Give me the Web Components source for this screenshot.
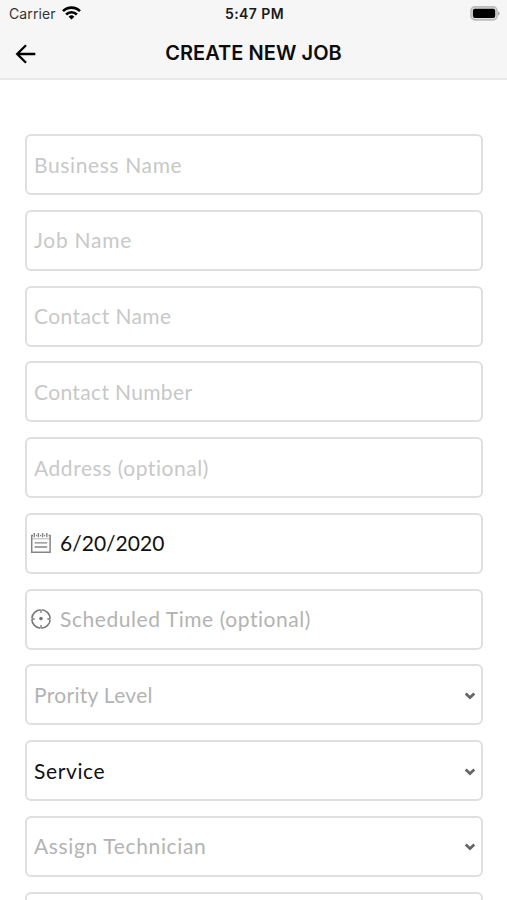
<!DOCTYPE html>
<html lang="en">
<head>
<meta charset="utf-8">
<meta name="viewport" content="width=device-width, initial-scale=1">
<title>Create New Job</title>
<style>
  html, body {
    margin: 0;
    height: 100%;
    overflow: hidden;
    background: #fff;
  }
</style>
</head>
<body>
<job-screen>
  <status-bar slot="top" carrier="Carrier" time="5:47 PM"></status-bar>
  <nav-header slot="top">CREATE NEW JOB</nav-header>
  <form-field style="--tracking: .63px">Business Name</form-field>
  <form-field style="--tracking: .75px">Job Name</form-field>
  <form-field>Contact Name</form-field>
  <form-field style="--tracking: .35px">Contact Number</form-field>
  <form-field style="--tracking: .54px">Address (optional)</form-field>
  <form-field icon="calendar" filled style="--tracking: .02px">6/20/2020</form-field>
  <form-field icon="clock" muted style="--tracking: .56px">Scheduled Time (optional)</form-field>
  <form-field select muted style="--tracking: .3px">Prority Level</form-field>
  <form-field select filled style="--tracking: .62px">Service</form-field>
  <form-field select muted style="--tracking: .64px">Assign Technician</form-field>
  <form-field></form-field>
</job-screen>

<script>
const icons = {
  calendar: `
    <svg width="22" height="22" viewBox="0 0 22 22" fill="none" stroke="#858585" stroke-width="1.5">
      <path d="M3 3.5H1.7v16.8h18.4V3.5h-1.5M6 3.5h1.2M10 3.5h1.2M14 3.5h1.2"/>
      <path d="M4.3 1v4.2M8.4 1v4.2M12.6 1v4.2M16.8 1v4.2" stroke-width="1.4"/>
      <path d="M2 6.8h17.6" stroke-width=".6"/>
      <path d="M4.6 10.8h12.6M4.6 15h12.6" stroke-width="1.3"/>
    </svg>`,
  clock: `
    <svg width="22" height="22" viewBox="0 0 22 22" fill="none" stroke="#777" stroke-width="1.6">
      <circle cx="11" cy="11" r="9.2" pathLength="80" stroke-dasharray="18.6 1.4" stroke-dashoffset="-1"/>
      <path d="M11 2v3M11 17v3M2 11h2.6M17.4 11H20" stroke-width="1.3"/>
      <circle cx="11" cy="10.6" r="1.8" fill="#777" stroke="none"/>
    </svg>`
};

class JobScreen extends HTMLElement {
  constructor() {
    super();
    this.attachShadow({ mode: 'open' }).innerHTML = `
      <style>
        :host {
          display: flex;
          flex-direction: column;
          height: 100%;
          overflow: hidden;
          background: #fff;
        }
        header {
          flex: none;
          box-sizing: border-box;
          height: 80px;
          background: #f7f6f7;
          border-bottom: 2px solid #e8e8e9;
        }
        main {
          flex: none;
          display: flex;
          flex-direction: column;
          gap: 14.75px;
          padding: 54.2px 24.5px 0 25px;
        }
      </style>
      <header><slot name="top"></slot></header>
      <main><slot></slot></main>
    `;
  }
}

class StatusBar extends HTMLElement {
  constructor() {
    super();
    this.attachShadow({ mode: 'open' });
  }

  connectedCallback() {
    this.shadowRoot.innerHTML = `
      <style>
        :host {
          display: grid;
          grid-template-columns: 1fr auto 1fr;
          align-items: center;
          box-sizing: border-box;
          height: 28px;
          padding: 0 7px 0 9px;
          font: 400 14px/28px Inter, sans-serif;
          color: #333;
        }
        .left {
          display: flex;
          align-items: center;
          gap: 6px;
          letter-spacing: 0.1px;
        }
        .time {
          font-weight: 600;
          font-size: 14px;
          letter-spacing: 0.4px;
          color: #1a1a1a;
        }
        .battery {
          justify-self: end;
          margin-top: -2px;
        }
        svg { display: block; }
        .wifi { margin-top: -2px; }
      </style>
      <div class="left">
        <span>${this.getAttribute('carrier')}</span>
        <svg class="wifi" width="19" height="14" viewBox="0 0 19 14" fill="none" stroke="#000" stroke-width="2.6">
          <path d="M1 5.2a12 12 0 0 1 17 0"/>
          <path d="M4.1 8.5a7.6 7.6 0 0 1 10.8 0"/>
          <path d="M9.5 13.6 6.6 10.8a4.1 4.1 0 0 1 5.8 0z" fill="#000" stroke="none"/>
        </svg>
      </div>
      <span class="time">${this.getAttribute('time')}</span>
      <svg class="battery" width="30" height="15" viewBox="0 0 30 15">
        <rect x="1" y=".9" width="26" height="13" rx="3.8" fill="#ddd" stroke="#bcbcbc" stroke-width="1.6"/>
        <rect x="2.9" y="2.8" width="22.3" height="9.3" rx="2" fill="#000"/>
        <path d="M28 5.2c2.2.8 2.2 3.6 0 4.4z" fill="#aaa"/>
      </svg>
    `;
  }
}

class NavHeader extends HTMLElement {
  constructor() {
    super();
    this.attachShadow({ mode: 'open' }).innerHTML = `
      <style>
        :host {
          display: grid;
          grid-template-columns: 1fr auto 1fr;
          align-items: center;
          height: 50px;
          padding: 0 15px;
          font: 600 20px/48px Inter, sans-serif;
          letter-spacing: 0.05px;
          color: #0c0c0c;
        }
        svg {
          display: block;
          margin-top: 2px;
        }
      </style>
      <svg width="22" height="22" viewBox="0 0 22 22" fill="none" stroke="#000" stroke-width="2.3">
        <path d="M20.3 11H2.5M11 2.2 2.2 11l8.8 8.8"/>
      </svg>
      <span><slot></slot></span>
    `;
  }
}

class FormField extends HTMLElement {
  constructor() {
    super();
    this.attachShadow({ mode: 'open' });
  }

  connectedCallback() {
    const icon = icons[this.getAttribute('icon')] || '';
    const arrow = this.hasAttribute('select') ? `
      <svg class="arrow" width="12" height="8" viewBox="0 0 12 8" fill="none" stroke="#666" stroke-width="2.7">
        <path d="M1.7 1.5 6 5.6l4.3-4.1"/>
      </svg>` : '';

    this.shadowRoot.innerHTML = `
      <style>
        :host {
          display: flex;
          align-items: center;
          box-sizing: border-box;
          height: 61px;
          padding: 0 5px 0 7px;
          border: 2px solid #dfdfdf;
          border-radius: 6px;
          font: 400 21px/30px Lato, sans-serif;
          letter-spacing: var(--tracking, 0.4px);
          color: #c8c8c8;
        }
        :host([icon]) { padding-left: 3px; }
        :host([muted]) { color: #b3b3b3; }
        :host([filled]) { color: #111; }
        .text { flex: 1; }
        .icon svg {
          display: block;
          margin-right: 8px;
        }
        .arrow { margin-top: 2px; }
      </style>
      <span class="icon">${icon}</span>
      <span class="text"><slot></slot></span>
      ${arrow}
    `;
  }
}

customElements.define('job-screen', JobScreen);
customElements.define('status-bar', StatusBar);
customElements.define('nav-header', NavHeader);
customElements.define('form-field', FormField);
</script>
</body>
</html>
